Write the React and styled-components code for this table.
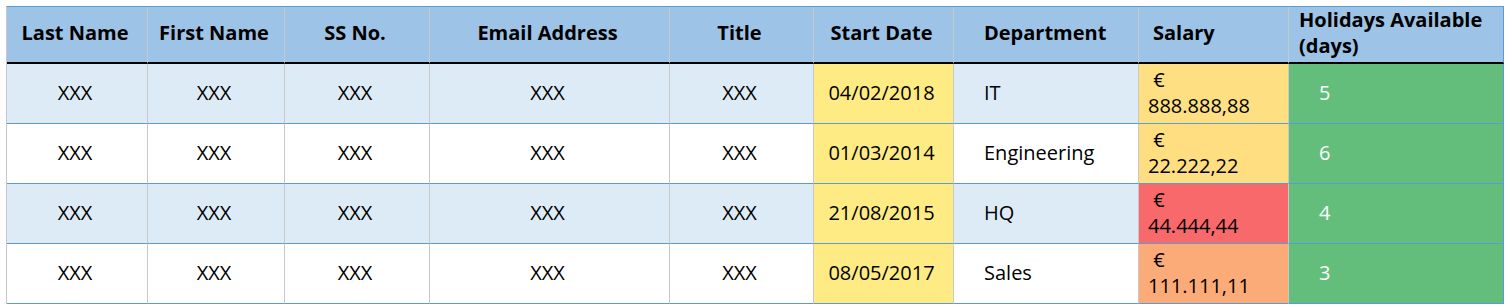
import React from 'react';
import styled, { createGlobalStyle } from 'styled-components';

const GlobalStyle = createGlobalStyle`
  body {
    margin: 0;
    background: #ffffff;
    font-family: "Open Sans", "Liberation Sans", sans-serif;
  }
`;

const Page = styled.div`
  padding: 6px 0 0 6px;
`;

const Table = styled.table`
  border-collapse: separate;
  border-spacing: 0;
  table-layout: fixed;
  width: 1498px;
  font-size: 20px;
  color: #000;
  border-top: 1px solid #5b9bd5;
  border-left: 1px solid #c8c8c8;
`;

const HeadCell = styled.th`
  box-sizing: border-box;
  background: #9dc3e6;
  height: 56px;
  padding: 0 4px 3px ${(p) => p.$pad || 0}px;
  text-align: ${(p) => p.$align || 'center'};
  font-weight: 700;
  line-height: 26px;
  border-right: 1px solid ${(p) => (p.$last ? '#5b9bd5' : '#c8c8c8')};
  border-bottom: 2px solid #000;
`;

const Row = styled.tr`
  background: ${(p) => (p.$shade ? '#ddebf7' : '#ffffff')};
`;

const Cell = styled.td`
  box-sizing: border-box;
  height: 60px;
  padding: 0 4px 2px ${(p) => p.$pad || 0}px;
  text-align: ${(p) => p.$align || 'center'};
  background: ${(p) => p.$bg || 'transparent'};
  color: ${(p) => p.$color || '#000'};
  border-right: 1px solid ${(p) => (p.$last ? '#5b9bd5' : '#c8c8c8')};
  border-bottom: 1px solid #5b9bd5;
  line-height: 26px;
  vertical-align: middle;
`;

const Line = styled.span`
  display: block;
  white-space: nowrap;
`;

const columns = [
  { title: 'Last Name', width: 141 },
  { title: 'First Name', width: 137 },
  { title: 'SS No.', width: 145 },
  { title: 'Email Address', width: 240 },
  { title: 'Title', width: 144 },
  { title: 'Start Date', width: 140 },
  { title: 'Department', width: 185, align: 'left', pad: 30 },
  { title: 'Salary', width: 150, align: 'left', pad: 14 },
  { title: 'Holidays Available (days)', width: 215, align: 'left', pad: 10 },
];

const rows = [
  { date: '04/02/2018', dept: 'IT', salary: '888.888,88', salaryBg: '#fee083', days: 5 },
  { date: '01/03/2014', dept: 'Engineering', salary: '22.222,22', salaryBg: '#fede81', days: 6 },
  { date: '21/08/2015', dept: 'HQ', salary: '44.444,44', salaryBg: '#f8696b', days: 4 },
  { date: '08/05/2017', dept: 'Sales', salary: '111.111,11', salaryBg: '#fbab77', days: 3 },
];

export default function App() {
  return (
    <Page>
      <GlobalStyle />
      <Table>
        <colgroup>
          {columns.map((c) => (
            <col key={c.title} style={{ width: c.width }} />
          ))}
        </colgroup>
        <thead>
          <tr>
            {columns.map((c, i) => (
              <HeadCell
                key={c.title}
                $align={c.align}
                $pad={c.pad}
                $last={i === columns.length - 1}
              >
                {c.title}
              </HeadCell>
            ))}
          </tr>
        </thead>
        <tbody>
          {rows.map((r, i) => (
            <Row key={r.date} $shade={i % 2 === 0}>
              <Cell>XXX</Cell>
              <Cell>XXX</Cell>
              <Cell>XXX</Cell>
              <Cell>XXX</Cell>
              <Cell>XXX</Cell>
              <Cell $bg="#ffeb84">{r.date}</Cell>
              <Cell $align="left" $pad={30}>{r.dept}</Cell>
              <Cell $align="left" $pad={9} $bg={r.salaryBg}>
                <Line>&nbsp;€</Line>
                <Line>{r.salary}</Line>
              </Cell>
              <Cell $align="left" $pad={30} $bg="#63be7b" $color="#ffffff" $last>
                {r.days}
              </Cell>
            </Row>
          ))}
        </tbody>
      </Table>
    </Page>
  );
}
